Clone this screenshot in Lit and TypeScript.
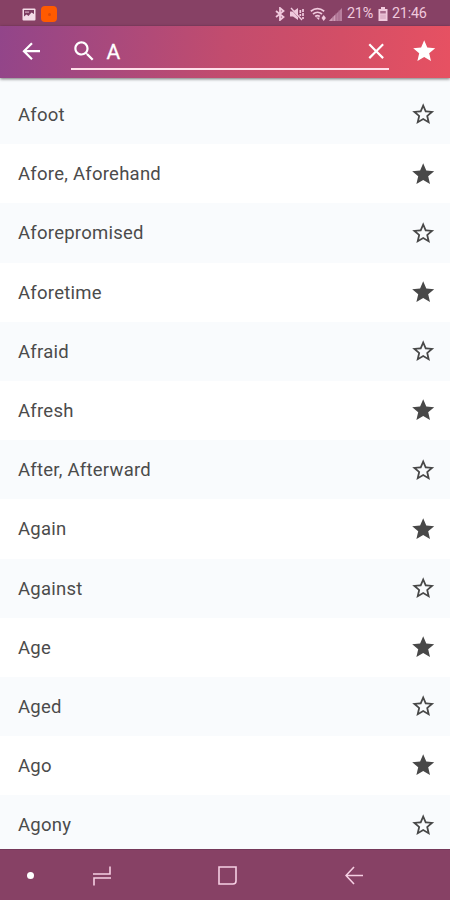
import { LitElement, html, css, svg } from "lit";
import { customElement, property } from "lit/decorators.js";

const STAR = "M12 17.27L18.18 21l-1.64-7.03L22 9.24l-7.19-.61L12 2 9.19 8.63 2 9.24l5.46 4.73L5.82 21z";
const STAR_OUTLINE =
  "M22 9.24l-7.19-.62L12 2 9.19 8.63 2 9.24l5.46 4.73L5.82 21 12 17.27 18.18 21l-1.63-7.03L22 9.24zM12 15.4l-3.76 2.27 1-4.28-3.32-2.88 4.38-.38L12 6.1l1.71 4.04 4.38.38-3.32 2.88 1 4.28L12 15.4z";
const BACK = "M20 11H7.83l5.59-5.59L12 4l-8 8 8 8 1.41-1.41L7.83 13H20v-2z";
const SEARCH =
  "M15.5 14h-.79l-.28-.27C15.41 12.59 16 11.11 16 9.5 16 5.91 13.09 3 9.5 3S3 5.91 3 9.5 5.91 16 9.5 16c1.61 0 3.09-.59 4.23-1.57l.27.28v.79l5 4.99L20.49 19l-4.99-5zm-6 0C7.01 14 5 11.99 5 9.5S7.01 5 9.5 5 14 7.01 14 9.5 11.99 14 9.5 14z";
const CLOSE = "M19 6.41L17.59 5 12 10.59 6.41 5 5 6.41 10.59 12 5 17.59 6.41 19 12 13.41 17.59 19 19 17.59 13.41 12z";

@customElement("glyph-icon")
export class GlyphIcon extends LitElement {
  @property() path = "";
  static styles = css`
    :host { display: block; width: 26.4px; height: 26.4px; flex: none; }
    svg { display: block; width: 100%; height: 100%; fill: currentColor; }
  `;
  render() {
    return html`<svg viewBox="0 0 24 24">${svg`<path d=${this.path}></path>`}</svg>`;
  }
}

@customElement("status-bar")
export class StatusBar extends LitElement {
  static styles = css`
    :host { display: flex; align-items: center; height: 26px; box-sizing: border-box; padding: 2px 23px 0 22px;
      background: #874165; color: #f0c9dd; font: 14.4px/24px Roboto, sans-serif; }
    svg { display: block; flex: none; }
    .app { width: 16px; height: 16px; border-radius: 4px; background: #ff5a00; margin-left: 5px; display: grid; place-items: center; }
    .dot { width: 3px; height: 3px; border-radius: 50%; background: #dc4a08; }
    .spacer { flex: 1; }
    .pct { margin-left: 5px; width: 27px; white-space: nowrap; letter-spacing: -0.25px; }
    .clock { margin-left: 4px; width: 35px; white-space: nowrap; letter-spacing: -0.25px; }
    .mute { margin-left: 4px; }
    .wifi { margin-left: 5px; }
    .signal { margin-left: 2px; }
    .battery { margin-left: 4px; }
  `;
  render() {
    return html`
      <svg width="14" height="13" viewBox="0 0 14 13"><rect x=".5" y=".5" width="13" height="12" rx="1" fill="#f3dce8"/><path d="M2 2h10v4L9.5 4.5 6.5 8 4.5 6.5 2 8.5z" fill="#7b3c61"/><path d="M3 3.5h4v1.2H3z" fill="#d5a9c1"/></svg>
      <span class="app"><span class="dot"></span></span>
      <span class="spacer"></span>
      <svg width="10" height="14" viewBox="0 0 10 14"><path d="M1 4l7.5 6L5 13V1l3.500 3L1 10" fill="none" stroke="currentColor" stroke-width="1.8"/></svg>
      <svg class="mute" width="16" height="14" viewBox="0 0 16 14"><path d="M1 4.500h3L9 1v12L4 9.500H1z" fill="currentColor"/><path d="M1 1l11 12" stroke="#874165" stroke-width=".8"/><path d="M2 1l11 12" stroke="currentColor" stroke-width="1.4"/><path d="M11.300 3v6M14 2v10" stroke="currentColor" stroke-width="1.7" stroke-dasharray="3 1"/></svg>
      <svg class="wifi" width="17" height="14" viewBox="0 0 17 14"><g fill="none" stroke="currentColor" stroke-width="1.7"><path d="M.8 4.200Q7.500-.8 14.200 4.200M3 7Q7.500 3.500 12 7M5.200 9.500Q7.500 7.700 9.800 9.500"/></g><path d="M6 10.500h3.500L9 13z" fill="currentColor"/><path d="M11.500 11l2.200-3 2.200 3-2.200 3z" fill="currentColor"/></svg>
      <svg class="signal" width="13" height="13" viewBox="0 0 13 13"><path d="M13 0v13H0z" fill="#b77f9e"/><path d="M6.500 6.500V13H0z" fill="#ce9cb6"/><path d="M4 8v5M7 5v8M10 2v11" stroke="#9e5f82" stroke-width=".7"/></svg>
      <span class="pct">21%</span>
      <svg class="battery" width="10" height="14" viewBox="0 0 10 14"><path d="M3 0h4v2h2.500v12H.5V2H3z" fill="currentColor"/><path d="M2.200 4h5.600v2.500H2.200z" fill="#a96a8c"/><path d="M2.200 7.500h5.600V12H2.200z" fill="#dfb2c9"/></svg>
      <span class="clock">21:46</span>
    `;
  }
}

@customElement("word-row")
export class WordRow extends LitElement {
  @property() word = "";
  @property({ type: Boolean, reflect: true }) starred = false;
  static styles = css`
    :host { display: flex; align-items: center; justify-content: space-between; flex: none; height: 59.2px;
      box-sizing: border-box; padding: 0 14px 0 18px; background: #f9fbfd; color: #4b4b4b;
      font: 18.5px/24px Roboto, sans-serif; letter-spacing: 0.25px; }
    :host([starred]) { background: #fff; }
    span { padding-top: 1px; }
    glyph-icon { color: #484848; margin-right: -0.2px; }
  `;
  render() {
    return html`<span>${this.word}</span><glyph-icon path=${this.starred ? STAR : STAR_OUTLINE}></glyph-icon>`;
  }
}

@customElement("app-root")
export class AppRoot extends LitElement {
  private words = ["Afoot", "Afore, Aforehand", "Aforepromised", "Aforetime", "Afraid", "Afresh", "After, Afterward",
    "Again", "Against", "Age", "Aged", "Ago", "Agony"];
  static styles = css`
    :host { display: flex; flex-direction: column; width: 450px; height: 900px; overflow: hidden; background: #fff; }
    .bar { display: flex; align-items: center; flex: none; height: 52px; box-sizing: border-box; padding: 0 13px 1px 18px; color: #fff;
      background: linear-gradient(97deg, #92458a 0%, #a9497c 25%, #c24c6e 50%, #d34e66 75%, #e75162 100%);
      box-shadow: 0 1px 3px rgba(0, 0, 0, .55); z-index: 1; }
    .field { display: flex; align-items: center; width: 319px; height: 35px; margin: 1px 0 0 26.6px; box-sizing: border-box;
      border-bottom: 2px solid #ffe0ea; }
    .query { flex: 1; margin-left: 9px; padding-top: 2px; font: 21px/26px Roboto, sans-serif; -webkit-text-stroke: .3px #fff; }
    .star { margin-left: 21.400px; }
    .list { flex: 1; min-height: 0; overflow: hidden; display: flex; flex-direction: column; padding-top: 7px; background: #f9fbfd; }
    .nav { flex: none; height: 51px; background: #874165; border-top: 1px solid #75395a; box-sizing: border-box;
      display: flex; align-items: center; color: #f6cfe3; padding: 1px 87.500px 0 27px; }
    .nav svg { display: block; fill: none; stroke: currentColor; stroke-width: 1.6; }
    .pin { width: 7px; height: 7px; border-radius: 50%; background: #fff; }
    .recent { margin-left: 59px; }
    .home { margin-left: 107px; }
    .back { margin-left: auto; }
  `;
  render() {
    return html`
      <status-bar></status-bar>
      <div class="bar">
        <glyph-icon path=${BACK}></glyph-icon>
        <div class="field">
          <glyph-icon path=${SEARCH}></glyph-icon>
          <span class="query">A</span>
          <glyph-icon path=${CLOSE}></glyph-icon>
        </div>
        <glyph-icon class="star" path=${STAR}></glyph-icon>
      </div>
      <div class="list">
        ${this.words.map((w, i) => html`<word-row .word=${w} ?starred=${i % 2 === 1}></word-row>`)}
      </div>
      <div class="nav">
        <span class="pin"></span>
        <svg class="recent" width="18" height="20" viewBox="0 0 18 20"><path d="M0 8h17V.5M18 12H1v7.500"/></svg>
        <svg class="home" width="19" height="19" viewBox="0 0 19 19"><path d="M1 14V1h17v14q0 3-3 3H1v-5"/></svg>
        <svg class="back" width="18" height="19" viewBox="0 0 18 19"><path d="M18 9.500H1M9 1L1 9.500 9 18"/></svg>
      </div>
    `;
  }
}
